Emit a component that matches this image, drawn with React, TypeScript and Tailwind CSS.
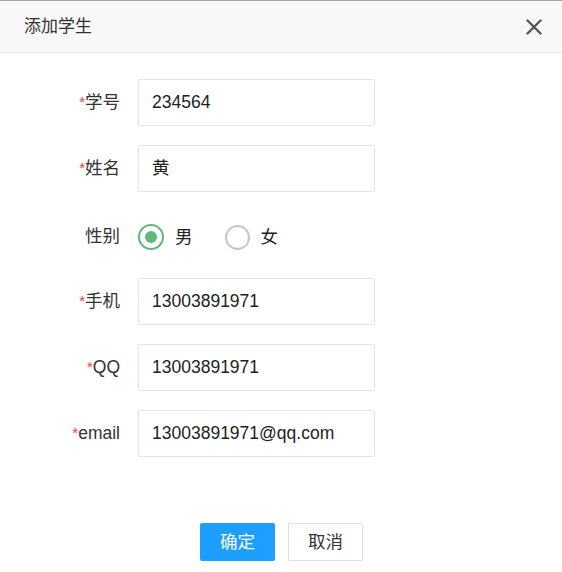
import React from "react";

const font = { fontFamily: '"Liberation Sans", Arial, "Noto Sans CJK SC", sans-serif' };

function Field({ label, required, value }: { label: string; required?: boolean; value: string }) {
  return (
    <div className="flex items-center h-[47px]">
      <div className="w-[120px] text-right text-[17.5px] text-[#333] leading-none">
        {required && <span className="text-[#ff3333] text-[15px] align-top">*</span>}
        {label}
      </div>
      <div className="ml-[18px] w-[237px] h-[47px] border border-[#e6e6e6] rounded-[2px] flex items-center pl-[13px] text-[17.5px] text-[#222]">
        {value}
      </div>
    </div>
  );
}

export default function App() {
  return (
    <div className="w-[562px] h-[572px] bg-white border-t border-[#a8a8a8] flex flex-col" style={font}>
      <div className="h-[52px] bg-[#f8f8f8] border-b border-[#e8e8e8] flex items-center justify-between pl-[24px] pr-[20px]">
        <span className="text-[17px] text-[#333]">添加学生</span>
        <svg width="16" height="16" viewBox="0 0 16 16">
          <path d="M1.5 1.5 L14.5 14.5 M14.5 1.5 L1.5 14.5" stroke="#555" strokeWidth="2.4" strokeLinecap="round" />
        </svg>
      </div>
      <div className="pt-[26px] flex flex-col gap-[19px]">
        <Field label="学号" required value="234564" />
        <Field label="姓名" required value="黄" />
        <div className="flex items-center h-[48px] pt-[4px]">
          <div className="w-[120px] text-right text-[17.5px] text-[#333] leading-none">性别</div>
          <div className="ml-[18px] flex items-center">
            <span className="w-[26px] h-[26px] rounded-full border-2 border-[#5fb878] flex items-center justify-center">
              <span className="w-[12px] h-[12px] rounded-full bg-[#5fb878]" />
            </span>
            <span className="ml-[11px] text-[17.5px] text-[#222]">男</span>
            <span className="ml-[32px] w-[25px] h-[25px] rounded-full border-2 border-[#c6c6c6]" />
            <span className="ml-[11px] text-[17.5px] text-[#222]">女</span>
          </div>
        </div>
        <Field label="手机" required value="13003891971" />
        <Field label="QQ" required value="13003891971" />
        <Field label="email" required value="13003891971@qq.com" />
      </div>
      <div className="mt-[66px] flex justify-center gap-[13px] pl-[1px]">
        <button className="w-[75px] h-[38px] bg-[#1e9fff] text-white text-[17.5px] rounded-[2px]">确定</button>
        <button className="w-[75px] h-[38px] bg-white border border-[#dedede] text-[#333] text-[17.5px] rounded-[2px]">取消</button>
      </div>
    </div>
  );
}
